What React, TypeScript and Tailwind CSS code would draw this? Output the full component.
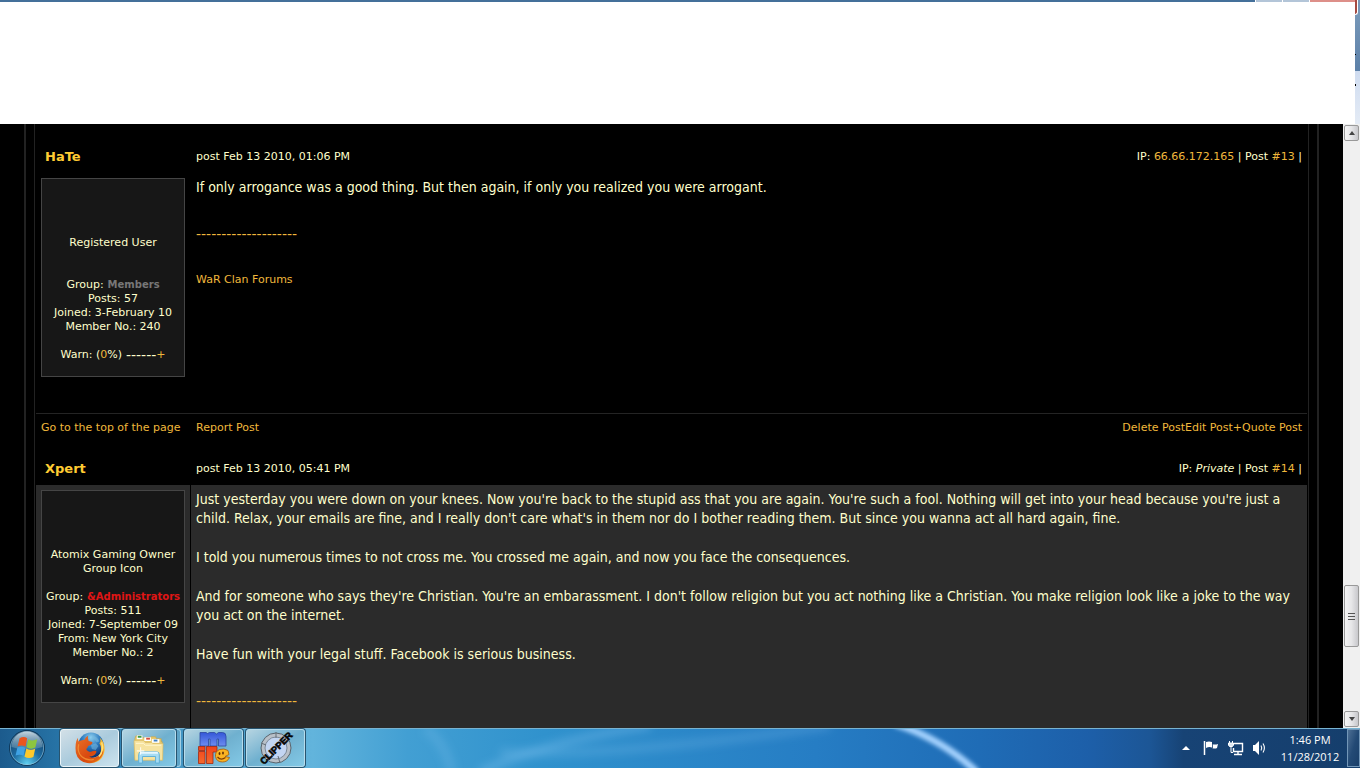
import type { ReactNode } from "react";

const link = "text-[#f0b83c] hover:underline";

function UserCard({ title, lines, children }: { title: ReactNode; lines: string[]; children: ReactNode }) {
  return (
    <div className="border border-[#454545] bg-[#171717] pt-[57px] pb-[14px] text-center text-[11px] leading-[14px] whitespace-nowrap">
      {title}
      <p className="flex justify-center gap-1">
        <span>Group:</span>
        {children}
      </p>
      {lines.map((l) => (
        <p key={l}>{l}</p>
      ))}
      <p className="flex items-center justify-center pt-[14px]">
        <span className="mr-1">
          Warn: (<a href="#warn" className={link}>0</a>%)
        </span>
        <span className="text-[14px] leading-[14px]">------</span>
        <a href="#warn-up" className={link}>+</a>
      </p>
    </div>
  );
}

function PostHead({ name, date, ip, num }: { name: string; date: string; ip: ReactNode; num: string }) {
  return (
    <header className="grid h-[34px] grid-cols-[154px_1fr] items-center gap-px pt-0.5">
      <h2 className="pl-[9px] text-[13px] font-bold">
        <a href="#user" className="text-[#ffcc33]">{name}</a>
      </h2>
      <div className="flex justify-between px-[5px] text-[11px] leading-[14px]">
        <span>post {date}</span>
        <span>
          IP: {ip} | Post <a href="#post" className={link}>{num}</a> |
        </span>
      </div>
    </header>
  );
}

function StartOrb() {
  return (
    <svg viewBox="0 0 38 38" className="size-[38px]" aria-hidden="true">
      <defs>
        <radialGradient id="orb" cx="50%" cy="95%" r="90%">
          <stop offset="0" stopColor="#5fd0f0" />
          <stop offset=".45" stopColor="#1d6da3" />
          <stop offset="1" stopColor="#173e63" />
        </radialGradient>
        <linearGradient id="orbShine" x1="0" y1="0" x2="0" y2="1">
          <stop offset="0" stopColor="#d7e6ee" stopOpacity=".9" />
          <stop offset="1" stopColor="#8fb4c8" stopOpacity=".3" />
        </linearGradient>
      </defs>
      <circle cx="19" cy="19" r="17.5" fill="url(#orb)" stroke="#0d3556" />
      <circle cx="19" cy="19" r="16.6" fill="none" stroke="#9fd0e6" strokeWidth=".8" opacity=".7" />
      <path d="M3.5 18a15.5 15.5 0 0 1 31 0Q19 23 3.5 18Z" fill="url(#orbShine)" />
      <path d="M11.600 9.200q4.300-2.300 7.600.1l-1.700 8.200q-3.700-2-7.900-.2z" fill="#e9561f" />
      <path d="M20.200 10.200q4 2.400 9 .1l-1.800 8.300q-4.600 2.200-8.900-.3z" fill="#8dc63f" />
      <path d="M9.400 18.600q4-1.900 7.900.1l-1.800 8q-3.900-2-7.900-.1z" fill="#3fa2e4" />
      <path d="M18.300 19.600q4.200 2.400 8.900.2l-1.800 8.200q-4.600 2.200-8.900-.3z" fill="#fdc92b" />
    </svg>
  );
}

function FirefoxIcon() {
  return (
    <svg viewBox="0 0 34 34" className="size-8" aria-hidden="true">
      <defs>
        <radialGradient id="globe" cx="50%" cy="20%" r="75%">
          <stop offset="0" stopColor="#8dd0f0" />
          <stop offset=".5" stopColor="#2b78bd" />
          <stop offset="1" stopColor="#10336f" />
        </radialGradient>
        <linearGradient id="fox" x1="0" y1="0" x2="1" y2="1">
          <stop offset="0" stopColor="#e8742a" />
          <stop offset=".6" stopColor="#d9480f" />
          <stop offset="1" stopColor="#e87817" />
        </linearGradient>
      </defs>
      <circle cx="18" cy="14" r="13.500" fill="url(#globe)" />
      <path d="M20 4q5 1 7 6l-3 1-2-3-4-1zM18 14l5-2 3 3-3 4-4-1z" fill="#79b9df" opacity=".55" />
      <path d="M27.500 6Q33 11 32.500 19 31 32 17.500 33q8-3 10.500-10 2-6-1-11 2-2 .5-6Z" fill="#f7b733" />
      <path d="M4 6q0 3 1 4 3-2 6-1.500Q12 5.500 15 4q-1 3 .5 5.500l4 1q.5 1.500-1.500 3l-3 1.500q-.5 2-2 3 1 3 5 3 3-1.500 5-1 1.500.7.500 2Q21 26.500 16 26q5 3.500 11-1.500l4-6.500q1 6-4 11-6 5-13 4Q4 31 2 22 .5 12 4 6Z" fill="url(#fox)" />
      <path d="M5 13q-2 8 3 13 6 5 13 3" fill="none" stroke="#f7a13c" strokeWidth="1.300" opacity=".7" />
      <path d="M29.500 11q2.500 9-3 15" fill="none" stroke="#ffe27a" strokeWidth="1.600" />
    </svg>
  );
}

function FolderIcon() {
  return (
    <svg viewBox="0 0 34 32" className="mt-0.5 h-[30px] w-8" aria-hidden="true">
      <path d="M2 5l1-3h6l1 2h8l1-1h5l1 2h5v3h1v19H2z" fill="#e8c96d" stroke="#c9a548" strokeWidth=".7" />
      <path d="M4 1.500h6v4H4z" fill="#fff" />
      <path d="M5 2h4v2H5z" fill="#3d9b46" />
      <path d="M12 3.500h7v4h-7z" fill="#fff" />
      <path d="M14 4h4v2h-4z" fill="#d84a3a" />
      <path d="M20 5.500h8v4h-8z" fill="#fff" />
      <path d="M22 6h4v2h-4z" fill="#3e7fc4" />
      <path d="M1 7h10l2 2h7l1 1h11l-.5 18H2z" fill="#f6e3a0" stroke="#d9bb62" strokeWidth=".7" />
      <path d="M3 10h8l2 2h17" fill="none" stroke="#fff6cf" />
      <path d="M6 31v-9q0-3 3-3h16q3 0 3 3v9h-4v-7H10v7z" fill="#a6dcf3" stroke="#5cafd8" />
      <path d="M7 21q0-2 2-2h16q2 0 2 2z" fill="#e4f7ff" />
      <path d="M8 14v8M4 18h8" stroke="#fff" strokeWidth="1.200" opacity=".8" />
    </svg>
  );
}

function MircIcon() {
  return (
    <svg viewBox="0 0 34 34" className="size-[34px]" aria-hidden="true">
      <defs>
        <linearGradient id="em" x1="0" y1="0" x2="0" y2="1">
          <stop offset="0" stopColor="#3457d8" />
          <stop offset="1" stopColor="#6d8df0" />
        </linearGradient>
        <linearGradient id="ir" x1="0" y1="0" x2="0" y2="1">
          <stop offset="0" stopColor="#f0421b" />
          <stop offset="1" stopColor="#f4692c" />
        </linearGradient>
      </defs>
      <path d="M3 15V1.500h6l1.500 1 2-1h5l2 1.500 2-1.500h4q3.500 0 3.500 4V15h-7.500V8h-1.500v7h-7V8h-1.500v7z" fill="url(#em)" stroke="#2b459f" strokeWidth=".8" />
      <path d="M1.500 15.500H8v4H1.500zM1.500 20.500H8v12H1.500z" fill="url(#ir)" stroke="#a32810" strokeWidth=".8" />
      <path d="M9.500 32.500v-17H20V21h-4v11.500z" fill="url(#ir)" stroke="#a32810" strokeWidth=".8" />
      <path d="M31 19.500q-4-2.500-8.500-1-4.500 2-4 7Q19.500 31 25.500 31q5 0 7-4.500l-4.500-1 4-2z" fill="#fbb322" stroke="#a45a0a" strokeWidth=".8" />
      <ellipse cx="22.500" cy="22.500" rx=".9" ry="1.600" fill="#5d2d05" />
      <ellipse cx="26" cy="22" rx=".9" ry="1.600" fill="#5d2d05" />
      <path d="M20.500 26q3.500 4 8 .5" fill="none" stroke="#7d3b06" strokeWidth="1.200" />
    </svg>
  );
}

function ClipperIcon() {
  return (
    <svg viewBox="0 0 36 36" className="size-9 overflow-visible" aria-hidden="true">
      <circle cx="18" cy="18" r="15" fill="#b9c0c8" stroke="#59646d" />
      <circle cx="18" cy="18" r="11" fill="#c3d5f2" stroke="#7d8997" />
      <path d="M18 2v6M3 13l5 2M28 8l-4 4M22 33l-2-7M10 30l4-5" stroke="#646e78" />
      <text x="18" y="21.500" textAnchor="middle" transform="rotate(-45 18 18)" fill="#050505" stroke="#050505" strokeWidth=".6" fontFamily="Liberation Sans, sans-serif" fontSize="9.500" fontWeight="700">
        CLIPPER
      </text>
    </svg>
  );
}

function TaskButton({ label, active, stacked, children }: { label: string; active?: boolean; stacked?: boolean; children: ReactNode }) {
  return (
    <div className="flex">
      <button
        aria-label={label}
        className={
          "flex h-[38px] items-center justify-center rounded-[3px] border shadow-[0_0_0_1px_#28546f] " +
          (stacked ? "w-[54px] " : "w-[59px] ") +
          (active
            ? "border-[#eaf4f8] bg-linear-to-br from-[#d3e0e7] via-[#aacbdd] to-[#cce3ee]"
            : "border-[#b6dcec] bg-linear-to-br from-[#b5d4e1] via-[#6fb0cf] to-[#83c9e6]")
        }
      >
        {children}
      </button>
      {stacked && <span className="ml-px h-[38px] w-1 rounded-r-[3px] border-y border-r border-[#a4cfe2] bg-[#5da3c6]" />}
    </div>
  );
}

function TaskbarBackdrop() {
  return (
    <svg viewBox="0 0 1360 40" preserveAspectRatio="none" className="absolute inset-0 size-full" aria-hidden="true">
      <defs>
        <linearGradient id="bar">
          <stop offset="0" stopColor="#1c5b8d" />
          <stop offset=".06" stopColor="#2b7db0" />
          <stop offset=".23" stopColor="#62b4dc" />
          <stop offset=".3" stopColor="#429fd3" />
          <stop offset=".4" stopColor="#3092cd" />
          <stop offset=".6" stopColor="#267dc4" />
          <stop offset=".72" stopColor="#1f6cb6" />
          <stop offset=".8" stopColor="#1d5fa9" />
          <stop offset=".845" stopColor="#1c5696" />
          <stop offset=".87" stopColor="#174375" />
          <stop offset="1" stopColor="#153e6c" />
        </linearGradient>
        <filter id="soft" x="-20%" y="-50%" width="140%" height="200%">
          <feGaussianBlur stdDeviation="2" />
        </filter>
        <filter id="softer" x="-20%" y="-50%" width="140%" height="200%">
          <feGaussianBlur stdDeviation="4" />
        </filter>
      </defs>
      <rect width="1360" height="40" fill="url(#bar)" />
      <path d="M895-4Q940 10 977 44" fill="none" stroke="#a6d3ff" strokeWidth="7" filter="url(#soft)" />
      <g filter="url(#softer)" fill="none" stroke="#a5d6ff" strokeWidth="8">
        <path d="M480 44Q550 12 650-2" opacity=".25" />
        <path d="M500 24Q610 30 830-2" opacity=".18" />
        <path d="M425 0Q445 15 452 44" strokeWidth="10" opacity=".15" />
      </g>
      <path d="M0 .5H1360" stroke="#78b3d1" />
    </svg>
  );
}

function Taskbar() {
  return (
    <footer className="relative h-10 shrink-0 overflow-hidden">
      <TaskbarBackdrop />
      <nav className="relative flex h-full items-center">
        <button aria-label="Start" className="ml-2 mr-[14px]">
          <StartOrb />
        </button>
        <div className="flex gap-[3px]">
          <TaskButton label="Firefox" active><FirefoxIcon /></TaskButton>
          <TaskButton label="Windows Explorer" stacked><FolderIcon /></TaskButton>
          <TaskButton label="mIRC"><MircIcon /></TaskButton>
          <TaskButton label="Clipper"><ClipperIcon /></TaskButton>
        </div>
        <div className="ml-auto flex h-full items-center text-white">
          <button aria-label="Show hidden icons" className="mr-[13px]">
            <svg viewBox="0 0 8 4" className="h-1 w-2"><path d="M4 0l4 4H0z" fill="#fff" /></svg>
          </button>
          <button aria-label="Action Center" className="mr-2">
            <svg viewBox="0 0 17 16" className="h-4 w-[17px]">
              <path d="M1.500 1v14" stroke="#fff" strokeWidth="1.500" />
              <path d="M3 2q3-1 6 0v2q3 1 6 0l-1 4q-2 1-5 0V7.500q-3-1-6 .5z" fill="#fff" />
              <path d="M9.500 2v6" stroke="#153e6c" strokeWidth=".8" />
            </svg>
          </button>
          <button aria-label="Network" className="mr-2">
            <svg viewBox="0 0 16 16" className="size-4" fill="none" stroke="#fff">
              <path d="M6 3.500h8.500v8H5.500V8" strokeWidth="1.400" />
              <path d="M10 12v2M6 14.500h8" strokeWidth="1.400" />
              <path d="M1.500 1v2M4.500 1v2" />
              <path d="M.5 3h5v2l-1 1.500h-3L.5 5z" fill="#dfe9f2" />
              <path d="M3 7v5.500h2" />
            </svg>
          </button>
          <button aria-label="Volume" className="mr-3">
            <svg viewBox="0 0 16 16" className="size-4" fill="none" stroke="#fff">
              <path d="M1 5h2l4-4v14l-4-4H1z" fill="#fff" stroke="none" />
              <path d="M9 5.500q1.500 2.500 0 5M11 3.500q2.800 4.500 0 9" strokeWidth="1.100" />
            </svg>
          </button>
          <time className="mr-[7px] w-[60px] text-center font-['Open_Sans','Noto_Sans',sans-serif] text-[11px] leading-[17px] whitespace-nowrap">
            <span className="block">1:46 PM</span>
            <span className="block">11/28/2012</span>
          </time>
          <button aria-label="Show desktop" className="h-[38px] w-[13px] border border-[#7397b8] bg-linear-to-br from-[#4d6f94] via-[#234a75] to-[#1a3f69]" />
        </div>
      </nav>
    </footer>
  );
}

function ScrollBar() {
  const box = "flex items-center justify-center rounded-[2px] border border-[#999] bg-linear-to-r from-[#f5f5f5] via-[#e6e6e8] to-[#c8c8cc]";
  return (
    <div className="flex w-[17px] shrink-0 flex-col items-center bg-[#f0f0f0] py-px">
      <button aria-label="Scroll up" className={box + " h-4 w-[15px]"}>
        <svg viewBox="0 0 6 4" className="h-1 w-1.5"><path d="M3 0l3 4H0z" fill="#444" /></svg>
      </button>
      <div className="flex-[444]" />
      <div role="presentation" className={box + " h-[62px] w-[15px] flex-col gap-[2px]"}>
        <i className="h-px w-[7px] bg-[#555]" />
        <i className="h-px w-[7px] bg-[#555]" />
        <i className="h-px w-[7px] bg-[#555]" />
      </div>
      <div className="flex-[64]" />
      <button aria-label="Scroll down" className={box + " h-4 w-[15px]"}>
        <svg viewBox="0 0 6 4" className="h-1 w-1.5"><path d="M3 4l3-4H0z" fill="#444" /></svg>
      </button>
    </div>
  );
}

function WindowTop() {
  return (
    <div className="flex h-[124px] shrink-0 bg-white">
      <div className="flex-1">
        <div className="flex h-[2px] bg-[#44709a]">
          <span className="ml-auto w-[27px] border-l border-white bg-[#b3c5d8]" />
          <span className="w-[27px] border-l border-white bg-[#b3c5d8]" />
          <span className="w-[46px] border-l border-white bg-[#dd8f89]" />
        </div>
      </div>
      <div className="flex w-[5px] flex-col bg-[#7697b8]">
        <span className="h-[15px] w-[3px] rounded-br border-r border-b border-white bg-[#a44a42]" />
        <span className="flex h-[56px] items-end bg-linear-to-b from-[#7697b8] to-[#5c80a8] pb-4">
          <i className="size-px bg-black" />
        </span>
        <span className="flex flex-1 bg-linear-to-b from-[#cfdcf0] to-[#e4ebf5] pt-[13px]">
          <i className="h-[2px] w-px bg-black" />
        </span>
      </div>
    </div>
  );
}

const message = "p-[5px] font-['DejaVu_Sans_Condensed','DejaVu_Sans',sans-serif] text-[14px] leading-[19px]";
const rule = "pt-7 font-['DejaVu_Sans',sans-serif] text-[#f0b83c]";

export default function App() {
  return (
    <div className="flex h-screen flex-col overflow-hidden bg-black font-['DejaVu_Sans',sans-serif] text-[#ffffcc]">
      <WindowTop />
      <div className="flex min-h-0 flex-1">
        <main className="min-w-0 flex-1 overflow-hidden px-6">
          <div className="h-full border-x-2 border-[#222] px-2">
            <div className="flex h-full flex-col border-x border-[#222] px-px pt-[15px]">
              <article className="shrink-0">
                <PostHead
                  name="HaTe"
                  date="Feb 13 2010, 01:06 PM"
                  ip={<a href="#ip" className={link}>66.66.172.165</a>}
                  num="#13"
                />
                <div className="grid grid-cols-[154px_1fr] gap-px pb-[36px]">
                  <div className="p-[5px] pb-0">
                    <UserCard
                      title={<p className="pb-7">Registered User</p>}
                      lines={["Posts: 57", "Joined: 3-February 10", "Member No.: 240"]}
                    >
                      <b className="text-[10px] text-[#777]">Members</b>
                    </UserCard>
                  </div>
                  <div className={message}>
                    <p>If only arrogance was a good thing. But then again, if only you realized you were arrogant.</p>
                    <p className={rule}>--------------------</p>
                    <p className="pt-[26px] font-['DejaVu_Sans',sans-serif] text-[11px]">
                      <a href="#forums" className={link}>WaR Clan Forums</a>
                    </p>
                  </div>
                </div>
                <div className="grid h-[30px] grid-cols-[154px_1fr] items-center gap-px border-t border-[#242424] text-[11px] whitespace-nowrap">
                  <a href="#top" className={link + " pl-[5px]"}>Go to the top of the page</a>
                  <div className="flex px-[5px]">
                    <a href="#report" className={link + " mr-auto"}>Report Post</a>
                    <a href="#delete" className={link}>Delete Post</a>
                    <a href="#edit" className={link}>Edit Post</a>
                    <a href="#quote" className={link}>+Quote Post</a>
                  </div>
                </div>
              </article>
              <article className="flex min-h-0 flex-1 flex-col pt-2">
                <PostHead name="Xpert" date="Feb 13 2010, 05:41 PM" ip={<em>Private</em>} num="#14" />
                <div className="grid flex-1 grid-cols-[154px_1fr] gap-px">
                  <div className="bg-[#2b2b2b] p-[5px]">
                    <UserCard
                      title={<p className="pb-[14px]">Atomix Gaming Owner<br />Group Icon</p>}
                      lines={["Posts: 511", "Joined: 7-September 09", "From: New York City", "Member No.: 2"]}
                    >
                      <b className="text-[10px] text-[#e01515]">&amp;Administrators</b>
                    </UserCard>
                  </div>
                  <div className={message + " bg-[#2b2b2b]"}>
                    <div className="flex flex-col gap-5">
                      <p>
                        Just yesterday you were down on your knees. Now you're back to the stupid ass that you are again. You're such a fool. Nothing will get into your head because you're just a child. Relax, your emails are fine, and I really don't care what's in them nor do I bother reading them. But since you wanna act all hard again, fine.
                      </p>
                      <p>I told you numerous times to not cross me. You crossed me again, and now you face the consequences.</p>
                      <p>
                        And for someone who says they're Christian. You're an embarassment. I don't follow religion but you act nothing like a Christian. You make religion look like a joke to the way you act on the internet.
                      </p>
                      <p>Have fun with your legal stuff. Facebook is serious business.</p>
                    </div>
                    <p className={rule}>--------------------</p>
                  </div>
                </div>
              </article>
            </div>
          </div>
        </main>
        <ScrollBar />
      </div>
      <Taskbar />
    </div>
  );
}
